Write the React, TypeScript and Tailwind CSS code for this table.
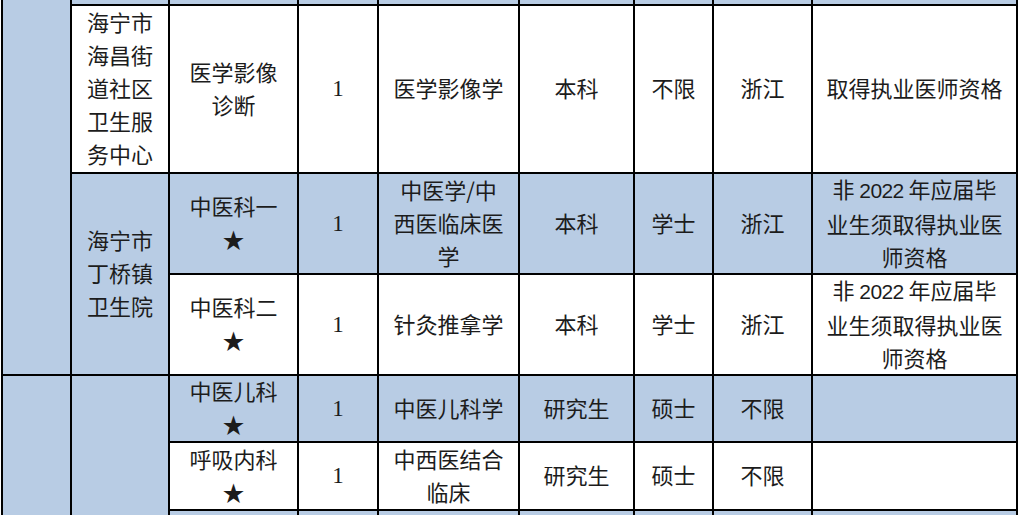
import React from "react";

const B = "bg-[#b8cce4]";
const W = "bg-white";

function Cell({
  c,
  r,
  bg,
  span = "",
  children,
}: {
  c: string;
  r: string;
  bg: string;
  span?: string;
  children?: React.ReactNode;
}) {
  return (
    <div
      className={`${c} ${r} ${span} ${bg} flex items-center justify-center text-center text-[22px] leading-[33px] text-[#1c1c1c] whitespace-nowrap`}
    >
      <div className="pb-[3px]">{children}</div>
    </div>
  );
}

const One = () => (
  <span className="font-['Liberation_Serif',serif] text-[23px]">1</span>
);

const Star = () => <span className="text-[22px]">★</span>;

const Num = ({ t }: { t: string }) => (
  <span className="font-['Liberation_Sans',sans-serif] text-[21px] tracking-[-0.6px]">{t}</span>
);

const Req2022 = () => (
  <>
    非 <Num t="2022" /> 年应届毕
    <br />
    业生须取得执业医
    <br />
    师资格
  </>
);

export default function App() {
  return (
    <div className="w-[1020px] h-[515px] overflow-hidden bg-white font-['Noto_Sans_CJK_SC','Noto_Sans',sans-serif]">
      <div className="ml-[1px] w-[1017px] px-[2px] pb-[2px] bg-black grid gap-[2px] grid-cols-[67px_96px_127px_78px_139px_113px_77px_97px_203px] grid-rows-[4px_166px_99px_99px_65px_66px_40px]">
        {/* first column merged cells */}
        <Cell c="col-start-1" r="row-start-1" span="row-span-4" bg={B} />
        <Cell c="col-start-1" r="row-start-5" span="row-span-3" bg={B} />

        {/* row 1 partial */}
        <Cell c="col-start-2" r="row-start-1" bg={B} />
        <Cell c="col-start-3" r="row-start-1" bg={B} />
        <Cell c="col-start-4" r="row-start-1" bg={B} />
        <Cell c="col-start-5" r="row-start-1" bg={B} />
        <Cell c="col-start-6" r="row-start-1" bg={B} />
        <Cell c="col-start-7" r="row-start-1" bg={B} />
        <Cell c="col-start-8" r="row-start-1" bg={B} />
        <Cell c="col-start-9" r="row-start-1" bg={B} />

        {/* row 2 */}
        <Cell c="col-start-2" r="row-start-2" bg={W}>
          海宁市
          <br />
          海昌街
          <br />
          道社区
          <br />
          卫生服
          <br />
          务中心
        </Cell>
        <Cell c="col-start-3" r="row-start-2" bg={W}>
          医学影像
          <br />
          诊断
        </Cell>
        <Cell c="col-start-4" r="row-start-2" bg={W}>
          <One />
        </Cell>
        <Cell c="col-start-5" r="row-start-2" bg={W}>
          医学影像学
        </Cell>
        <Cell c="col-start-6" r="row-start-2" bg={W}>
          本科
        </Cell>
        <Cell c="col-start-7" r="row-start-2" bg={W}>
          不限
        </Cell>
        <Cell c="col-start-8" r="row-start-2" bg={W}>
          浙江
        </Cell>
        <Cell c="col-start-9" r="row-start-2" bg={W}>
          取得执业医师资格
        </Cell>

        {/* row 3 */}
        <Cell c="col-start-2" r="row-start-3" span="row-span-2" bg={B}>
          海宁市
          <br />
          丁桥镇
          <br />
          卫生院
        </Cell>
        <Cell c="col-start-3" r="row-start-3" bg={B}>
          中医科一
          <br />
          <Star />
        </Cell>
        <Cell c="col-start-4" r="row-start-3" bg={B}>
          <One />
        </Cell>
        <Cell c="col-start-5" r="row-start-3" bg={B}>
          中医学/中
          <br />
          西医临床医
          <br />
          学
        </Cell>
        <Cell c="col-start-6" r="row-start-3" bg={B}>
          本科
        </Cell>
        <Cell c="col-start-7" r="row-start-3" bg={B}>
          学士
        </Cell>
        <Cell c="col-start-8" r="row-start-3" bg={B}>
          浙江
        </Cell>
        <Cell c="col-start-9" r="row-start-3" bg={B}>
          <Req2022 />
        </Cell>

        {/* row 4 */}
        <Cell c="col-start-3" r="row-start-4" bg={W}>
          中医科二
          <br />
          <Star />
        </Cell>
        <Cell c="col-start-4" r="row-start-4" bg={W}>
          <One />
        </Cell>
        <Cell c="col-start-5" r="row-start-4" bg={W}>
          针灸推拿学
        </Cell>
        <Cell c="col-start-6" r="row-start-4" bg={W}>
          本科
        </Cell>
        <Cell c="col-start-7" r="row-start-4" bg={W}>
          学士
        </Cell>
        <Cell c="col-start-8" r="row-start-4" bg={W}>
          浙江
        </Cell>
        <Cell c="col-start-9" r="row-start-4" bg={W}>
          <Req2022 />
        </Cell>

        {/* row 5 */}
        <Cell c="col-start-2" r="row-start-5" span="row-span-3" bg={B} />
        <Cell c="col-start-3" r="row-start-5" bg={B}>
          中医儿科
          <br />
          <Star />
        </Cell>
        <Cell c="col-start-4" r="row-start-5" bg={B}>
          <One />
        </Cell>
        <Cell c="col-start-5" r="row-start-5" bg={B}>
          中医儿科学
        </Cell>
        <Cell c="col-start-6" r="row-start-5" bg={B}>
          研究生
        </Cell>
        <Cell c="col-start-7" r="row-start-5" bg={B}>
          硕士
        </Cell>
        <Cell c="col-start-8" r="row-start-5" bg={B}>
          不限
        </Cell>
        <Cell c="col-start-9" r="row-start-5" bg={B} />

        {/* row 6 */}
        <Cell c="col-start-3" r="row-start-6" bg={W}>
          呼吸内科
          <br />
          <Star />
        </Cell>
        <Cell c="col-start-4" r="row-start-6" bg={W}>
          <One />
        </Cell>
        <Cell c="col-start-5" r="row-start-6" bg={W}>
          中西医结合
          <br />
          临床
        </Cell>
        <Cell c="col-start-6" r="row-start-6" bg={W}>
          研究生
        </Cell>
        <Cell c="col-start-7" r="row-start-6" bg={W}>
          硕士
        </Cell>
        <Cell c="col-start-8" r="row-start-6" bg={W}>
          不限
        </Cell>
        <Cell c="col-start-9" r="row-start-6" bg={W} />

        {/* row 7 partial */}
        <Cell c="col-start-3" r="row-start-7" bg={B} />
        <Cell c="col-start-4" r="row-start-7" bg={B} />
        <Cell c="col-start-5" r="row-start-7" bg={B} />
        <Cell c="col-start-6" r="row-start-7" bg={B} />
        <Cell c="col-start-7" r="row-start-7" bg={B} />
        <Cell c="col-start-8" r="row-start-7" bg={B} />
        <Cell c="col-start-9" r="row-start-7" bg={B} />
      </div>
    </div>
  );
}
